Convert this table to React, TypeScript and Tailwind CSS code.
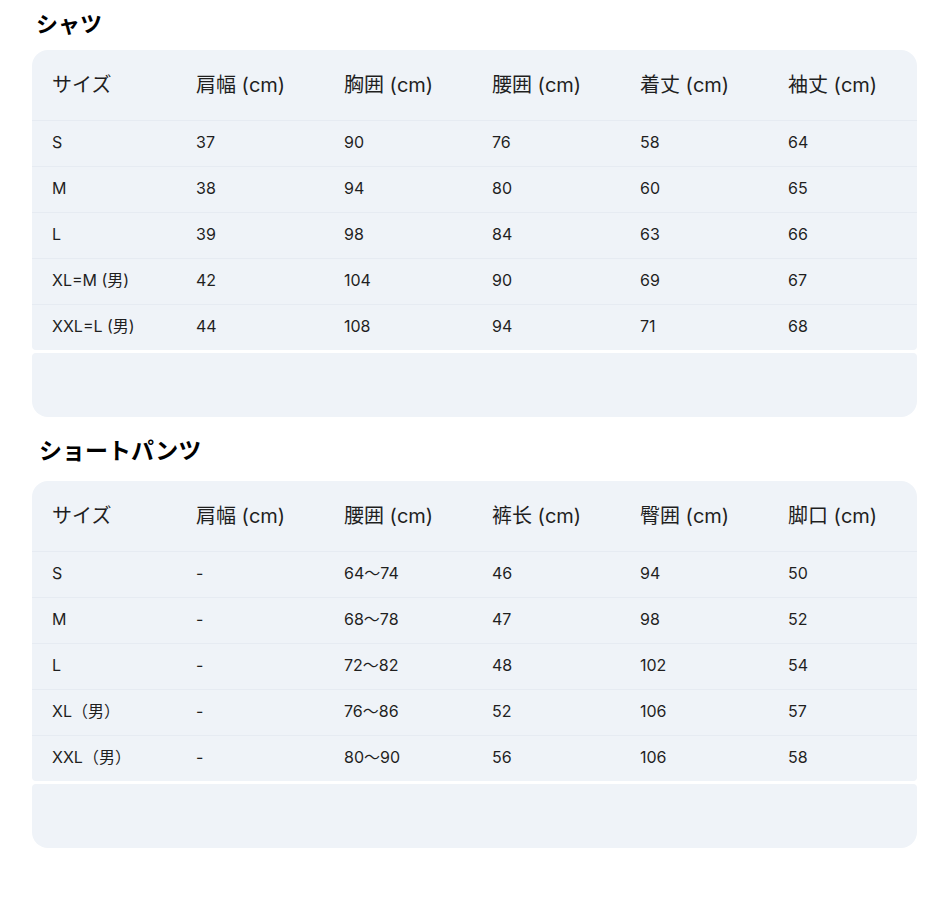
const SHIRT_HEAD = ['サイズ', '肩幅 (cm)', '胸囲 (cm)', '腰囲 (cm)', '着丈 (cm)', '袖丈 (cm)']

const SHIRT_ROWS = [
  ['S', '37', '90', '76', '58', '64'],
  ['M', '38', '94', '80', '60', '65'],
  ['L', '39', '98', '84', '63', '66'],
  ['XL=M (男)', '42', '104', '90', '69', '67'],
  ['XXL=L (男)', '44', '108', '94', '71', '68'],
]

const PANTS_HEAD = ['サイズ', '肩幅 (cm)', '腰囲 (cm)', '裤长 (cm)', '臀囲 (cm)', '脚口 (cm)']

const PANTS_ROWS = [
  ['S', '-', '64〜74', '46', '94', '50'],
  ['M', '-', '68〜78', '47', '98', '52'],
  ['L', '-', '72〜82', '48', '102', '54'],
  ['XL（男）', '-', '76〜86', '52', '106', '57'],
  ['XXL（男）', '-', '80〜90', '56', '106', '58'],
]

const GRID = 'grid grid-cols-[144px_148px_148px_148px_148px_1fr]'

function SizeTable({ head, rows }: { head: string[]; rows: string[][] }) {
  return (
    <div className="w-[885px]">
      {/* table */}
      <div className="rounded-t-2xl rounded-b-[4px] bg-[#eff3f8] overflow-hidden">
        <div className={`${GRID} h-[70px] items-center`}>
          {head.map((h, i) => (
            <div key={i} className="px-5 text-[20px] text-[#1f1f1f]">
              {h}
            </div>
          ))}
        </div>

        {rows.map((r, i) => (
          <div
            key={i}
            className={`${GRID} h-[46px] items-center border-t border-[#e6ebf2] pb-[3px]`}
          >
            {r.map((c, j) => (
              <div key={j} className="px-5 text-[16px] text-[#1f1f1f]">
                {c}
              </div>
            ))}
          </div>
        ))}
      </div>

      {/* footer block */}
      <div className="mt-[3px] h-[64px] rounded-t-[4px] rounded-b-2xl bg-[#eff3f8]" />
    </div>
  )
}

export default function App() {
  return (
    <div
      className="bg-white min-h-[900px] pl-8 pt-[10px]"
      style={{ fontFamily: 'Inter, "Noto Sans CJK JP", sans-serif' }}
    >
      <h2 className="pl-[4px] h-[28px] leading-[28px] text-[22px] font-bold text-black">
        シャツ
      </h2>
      <div className="mt-[12px]">
        <SizeTable head={SHIRT_HEAD} rows={SHIRT_ROWS} />
      </div>

      <h2 className="mt-[20px] pl-[7px] h-[28px] leading-[28px] text-[23px] font-bold text-black">
        ショートパンツ
      </h2>
      <div className="mt-[16px]">
        <SizeTable head={PANTS_HEAD} rows={PANTS_ROWS} />
      </div>
    </div>
  )
}
